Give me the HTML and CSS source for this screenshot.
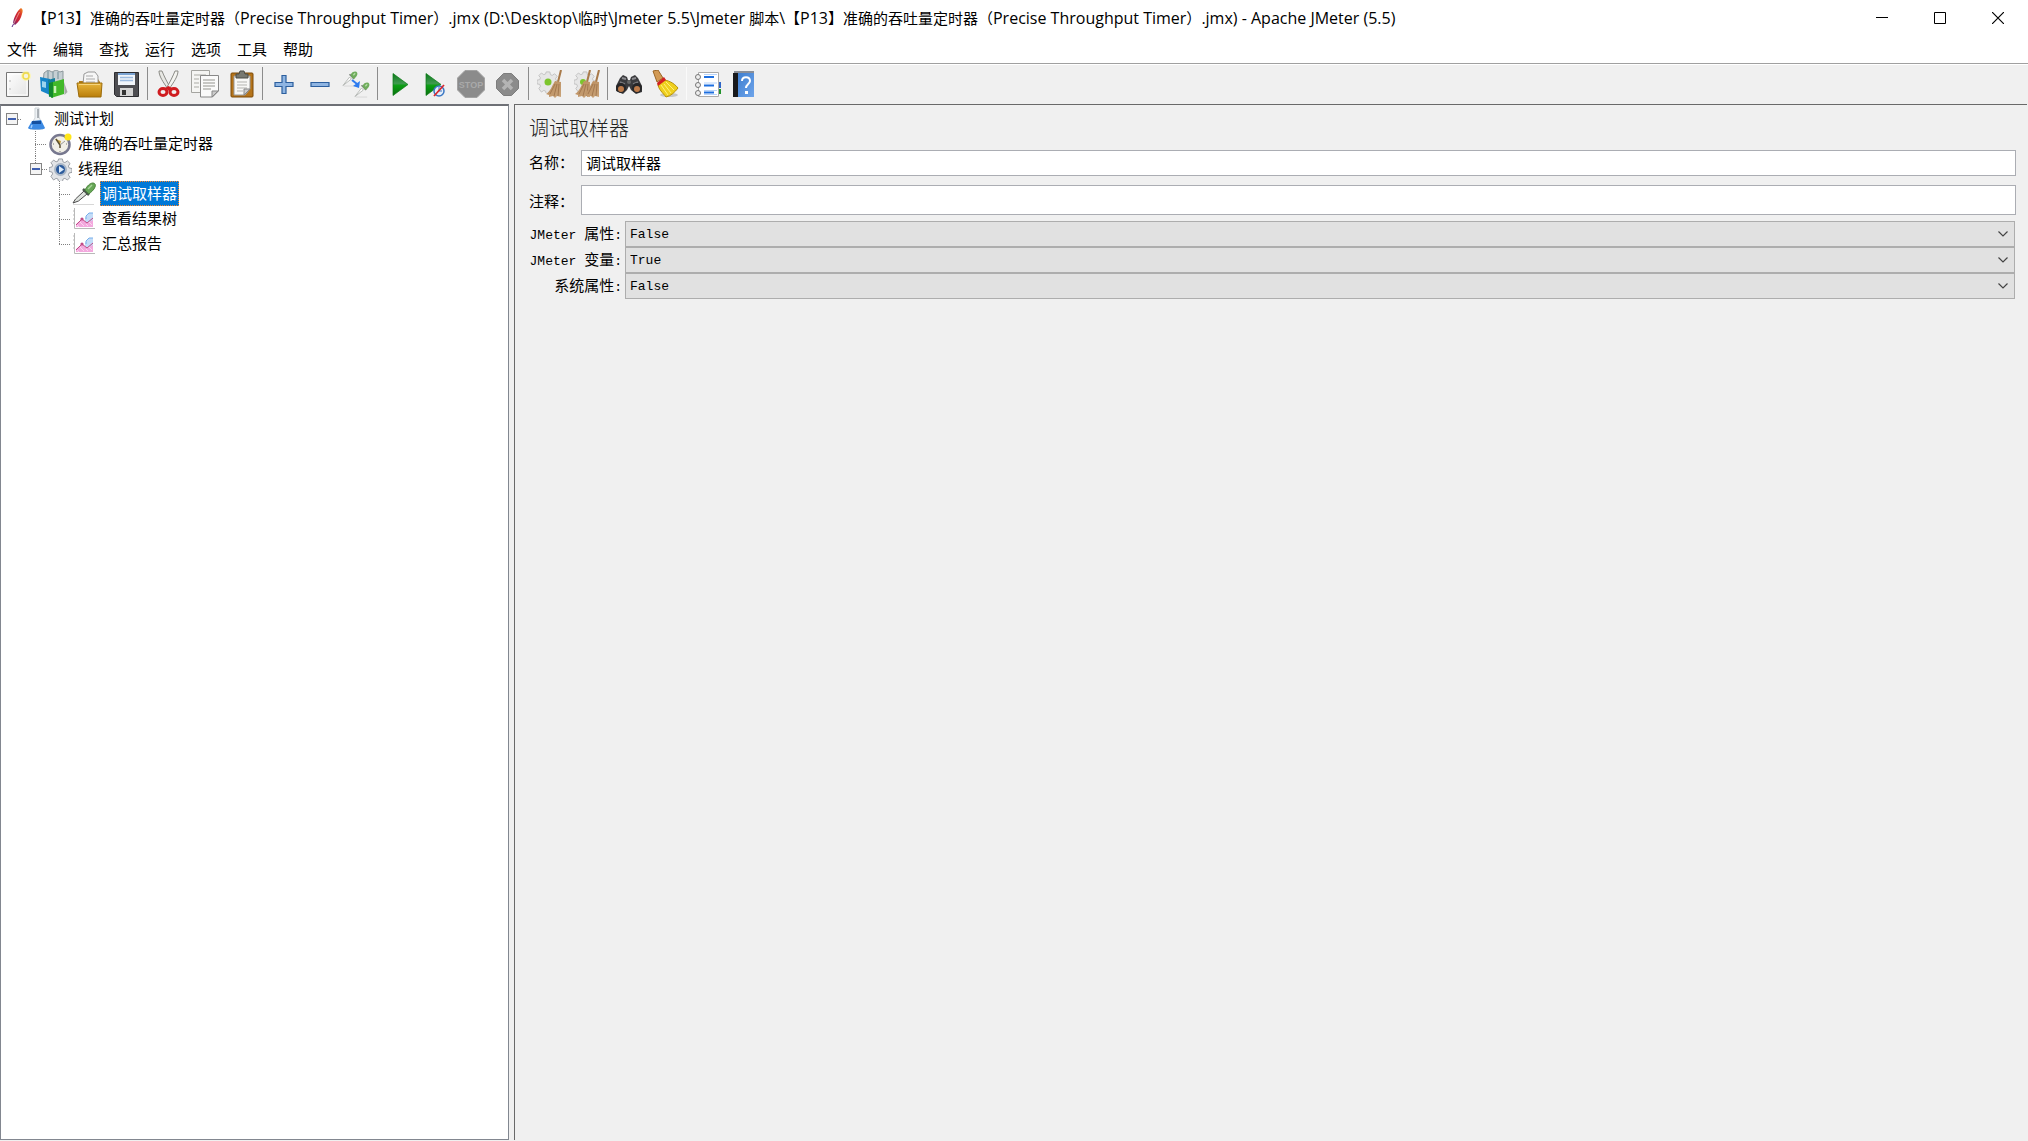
FILE: index.html
```html
<!DOCTYPE html>
<html lang="zh-CN">
<head>
<meta charset="utf-8">
<title>Apache JMeter (5.5)</title>
<link rel="stylesheet" href="styles.css">
</head>
<body>
<svg class="defs" width="0" height="0" aria-hidden="true">
  <defs>
    <linearGradient id="green" x1="0" y1="0" x2="0" y2="1"><stop offset="0" stop-color="#0c7a1c"/><stop offset=".45" stop-color="#3f9a4f"/><stop offset=".55" stop-color="#0b9f12"/><stop offset="1" stop-color="#0a6f10"/></linearGradient>
    <linearGradient id="paper" x1="0" y1="0" x2="1" y2="1"><stop offset="0" stop-color="#fff"/><stop offset="1" stop-color="#e3e3e3"/></linearGradient>
    <linearGradient id="gold" x1="0" y1="0" x2="0" y2="1"><stop offset="0" stop-color="#e8b63c"/><stop offset="1" stop-color="#b97d0a"/></linearGradient>
    <linearGradient id="blue" x1="0" y1="0" x2="1" y2="1"><stop offset="0" stop-color="#3f7fd0"/><stop offset="1" stop-color="#6ea4ea"/></linearGradient>
    <linearGradient id="feather" x1="0" y1="1" x2="1" y2="0"><stop offset="0" stop-color="#5a2a86"/><stop offset=".35" stop-color="#c3203c"/><stop offset=".7" stop-color="#d9352b"/><stop offset="1" stop-color="#f59a23"/></linearGradient>
    <linearGradient id="straw" x1="0" y1="0" x2="1" y2="1"><stop offset="0" stop-color="#b98a5a"/><stop offset="1" stop-color="#c9a47a"/></linearGradient>
    <symbol id="gear" viewBox="0 0 24 24"><path d="M10 1h4l.6 3 2 .8 2.600-1.800 2.800 2.800-1.800 2.600.8 2 3 .6v4l-3 .6-.8 2 1.800 2.600-2.800 2.800-2.600-1.800-2 .8-.6 3h-4l-.6-3-2-.8-2.600 1.800L2 19.200l1.800-2.600-.8-2-3-.6v-4l3-.6.8-2L2 5l2.800-2.800L7.400 4l2-.8z"/></symbol>
    <symbol id="brush" viewBox="0 0 16 28"><path d="M15 0 12 12" stroke="#a87a4a" stroke-width="2"/><path d="M9 11l6 1v15l-4-1-2 2-2-2-4 1v-2l-3-1C4 22 6 16 9 11z" fill="url(#straw)"/><path d="M9 14 4 24M11 14 8 26M13 14l-1 12" stroke="#9a7048" stroke-width=".8" fill="none"/></symbol>
    <symbol id="chart" viewBox="0 0 24 24"><path d="M2.500 1v20.500H23M1 4h2M1 8h2M1 12h2M1 16h2" stroke="#b9b9b9" fill="none"/><path d="M13 15v-4l4-5h4v9z" fill="#c3dcf8"/><path d="M14 12V9l3-3h4" stroke="#76aeea" fill="none"/><path d="M4 20v-3l6-5 5 4 6-3v7z" fill="#f3a9de"/><path d="m4 18 6-6 5 4 6-5" stroke="#c04b86" fill="none"/><circle cx="10" cy="12" r="1.600" fill="#c04b86"/><path d="m5 18 2 2m1-5 4 4m2-2 2 2m1-4 3 3" stroke="#fbd6ee"/></symbol>
    <symbol id="dropper" viewBox="0 0 24 24"><path d="M1 22.500h21" stroke="#d7d7d7"/><path d="M1 21 3.500 17 12 9l3 3-8.500 7z" fill="#dfe3df" stroke="#4c4c4c"/><path d="m11 7 6 6" stroke="#4a5a4a" stroke-width="2.500"/><path d="M13 8c2-4 5-7 8-7 2 0 3 2 2 4-1 3-4 5-6 7z" fill="#67a757" stroke="#4b853d"/><path d="m16 7 4-4" stroke="#a9d69c" stroke-width="1.500"/></symbol>
    <symbol id="dropper-small" viewBox="0 0 17 17"><path d="M2 16.500h12" stroke="#d7d7d7"/><path d="M1 16 8 7l2 2z" fill="#fff" stroke="#b4b8b4"/><path d="m8 4 5 5" stroke="#7d857d" stroke-width="1.800"/><path d="M9 5c1-3 3-4 5-4s3 2 2 4c-1 2-2 3-4 4z" fill="#6fac5c"/><path d="m12 5 2-2" stroke="#b4dba6" stroke-width="1.500"/></symbol>
  </defs>
</svg>

<header class="titlebar">
  <svg class="app-icon" width="12" height="20" viewBox="0 0 12 20" aria-hidden="true"><path d="M10 0c2 1 2 3 1 6-1 4-3 8-7 11L2 15C3 9 6 3 10 0z" fill="url(#feather)"/><path d="M8.500 4 2.500 16" stroke="#f2b7a8" stroke-width=".7"/><path d="m2.500 16-1.500 3" stroke="#5a2a86"/></svg>
  <h1 class="window-title">【<span class="en">P13</span>】准确的吞吐量定时器（<span class="en">Precise Throughput Timer</span>）<span class="en">.jmx (D:\Desktop\</span>临时<span class="en">\Jmeter 5.5\Jmeter </span>脚本<span class="en">\</span>【<span class="en">P13</span>】准确的吞吐量定时器（<span class="en">Precise Throughput Timer</span>）<span class="en">.jmx) - Apache JMeter (5.5)</span></h1>
  <div class="window-buttons">
    <button type="button" aria-label="最小化"><svg width="12" height="12"><path d="M0 5.500h12" stroke="#000"/></svg></button>
    <button type="button" aria-label="最大化"><svg width="12" height="12"><path d="M.5.500h11v11H.5z" stroke="#000" fill="none"/></svg></button>
    <button type="button" aria-label="关闭"><svg width="12" height="12"><path d="m0 0 12 12M12 0 0 12" stroke="#000" stroke-width="1.200"/></svg></button>
  </div>
</header>

<nav class="menubar">
  <button type="button">文件</button><button type="button">编辑</button><button type="button">查找</button><button type="button">运行</button><button type="button">选项</button><button type="button">工具</button><button type="button">帮助</button>
</nav>

<div class="toolbar" role="toolbar">
  <button type="button" aria-label="新建"><svg width="28" height="28"><path d="M2.500 2.500h22v24h-22z" fill="url(#paper)" stroke="#777"/><path d="M4 4h19v21H4z" fill="none" stroke="#fff"/><circle cx="6" cy="11" r="1" fill="#ccc"/><circle cx="6" cy="19" r="1" fill="#ccc"/><circle cx="22" cy="6" r="5" fill="#fff7a0" opacity=".7"/><circle cx="22" cy="6" r="3" fill="#f6f3dc" stroke="#f1dc4c" stroke-width="1.500"/></svg></button>
  <button type="button" aria-label="模板"><svg width="28" height="28"><path d="M4 3l4-3 4 2 4-2 4 2 3-1v12H3z" fill="#c6cfd3" stroke="#8d989c"/><path d="M8 1v8M13 2v7M18 2v7" stroke="#6f8b96"/><path d="m0 7 10 2v16L1 21z" fill="#1785c8"/><path d="m2 11 4 1v6l-4-1z" fill="#9ed5ee"/><path d="m8 10 7-2v17l-6 2z" fill="#137d9d"/><path d="m10 13 3-1 11-3v15l-13 4z" fill="#42b929"/><path d="m9 13 4-1v16l-4-2z" fill="#138a2d"/><path d="M15 16v7" stroke="#c8f2b6" stroke-width="2.500"/><path d="m24 12 .5 13 3-3z" fill="#a7aaa7"/></svg></button>
  <button type="button" aria-label="打开"><svg width="28" height="28"><path d="M3 11h5v-2h14l2 3v14H3z" fill="#b17b14"/><path d="M7 14 8 4l4-2h7l3 4v8z" fill="#f6f6f6" stroke="#999"/><path d="M10 6h7m-7 3h9m-9 3h9" stroke="#aaa"/><path d="M1 13h25l-1 14H3z" fill="url(#gold)" stroke="#9c6c0c"/><path d="M3 14.500h21" stroke="#f5d47c"/></svg></button>
  <button type="button" aria-label="保存"><svg width="28" height="28"><path d="M2.500 2.500h24v24h-22l-2-2z" fill="#4e4e52" stroke="#2c2c30"/><path d="M6 3h17v12H6z" fill="#f1f5fa"/><path d="M6 3h17v2H6z" fill="#7ba4d3"/><path d="M8 7.500h13m-13 3h13" stroke="#9cbbe0" stroke-width="1.500"/><path d="M8 18h13v8H8z" fill="#d4d4d4"/><path d="M10 20h4v5h-4z" fill="#333"/></svg></button>
  <span class="sep"></span>
  <button type="button" aria-label="剪切"><svg width="28" height="28"><path d="M4 1c0 5 4 11 9 18l2-2C12 12 9 6 7 1z" fill="#e8e8e4" stroke="#8b8b86"/><path d="M23 1c0 5-4 11-9 18l-2-2C15 12 18 6 20 1z" fill="#f4f4f0" stroke="#8b8b86"/><g fill="none" stroke="#d01c20" stroke-width="3"><ellipse cx="8" cy="22" rx="4" ry="3.500"/><ellipse cx="19" cy="22" rx="4" ry="3.500"/></g><path d="m10 18 3.500-2 3.500 2-3 3z" fill="#d01c20"/></svg></button>
  <button type="button" aria-label="复制"><svg width="30" height="28"><path d="M1.500.5h18v22h-18z" fill="#f5f5f3" stroke="#a4a4a0"/><path d="M4 5h12M4 9h5m-5 4h5m-5 4h5" stroke="#c4c4c0" stroke-width="1.500"/><path d="M10.500 5.500h18V21l-6 6h-12z" fill="#fafafa" stroke="#888"/><path d="M13 10h12m-12 3h12m-12 3h12m-12 3h8" stroke="#b7b7b3" stroke-width="1.500"/><path d="M22 27v-6h6z" fill="#ccc" stroke="#888"/></svg></button>
  <button type="button" aria-label="粘贴"><svg width="28" height="28"><rect x="4" y="3" width="22" height="24" rx="1" fill="#b5741a" stroke="#7c4a08"/><path d="M7 6h16v13l-5 6H7z" fill="#f8f8f6" stroke="#999"/><path d="M10 12h10m-10 3h10m-10 3h10m-10 3h6" stroke="#b3b3af"/><path d="M17 25v-6h6z" fill="#ccc" stroke="#888"/><path d="M9 8V4h3l1-3h4l1 3h3v4z" fill="#777870" stroke="#4c4d47"/></svg></button>
  <span class="sep"></span>
  <button type="button" aria-label="展开"><svg width="28" height="28"><path d="M12 5.500h4v7h7v4h-7v7h-4v-7H5v-4h7z" fill="#8fb5e2" stroke="#2c5f9e" stroke-width="1.200"/></svg></button>
  <button type="button" aria-label="折叠"><svg width="28" height="28"><path d="M5 12.500h18v4H5z" fill="#8fb5e2" stroke="#2c5f9e" stroke-width="1.200"/></svg></button>
  <button type="button" aria-label="切换"><svg width="28" height="28"><use href="#dropper-small" x="0" y="0" width="16" height="17"/><use href="#dropper-small" x="12" y="11" width="16" height="17"/><path d="m10 10 5 4" stroke="#2f7df0" stroke-width="2"/><path d="m18 11-1 7-6-2z" fill="#2f7df0"/></svg></button>
  <span class="sep"></span>
  <button type="button" aria-label="启动"><svg width="28" height="28"><path d="M8 3.500 23 14.500 8 25.500z" fill="url(#green)" stroke="#0a7a14" stroke-width=".7"/></svg></button>
  <button type="button" aria-label="不停顿开始"><svg width="28" height="28"><path d="M5 3.500 20 14.500 5 25.500z" fill="url(#green)" stroke="#0a7a14" stroke-width=".7"/><circle cx="18" cy="21" r="5" fill="#e4edf9" stroke="#3b78c4" stroke-width="1.500"/><path d="M18 17v4h3" stroke="#3b78c4" fill="none"/><path d="m13 26 10-11" stroke="#d9262c" stroke-width="1.700"/></svg></button>
  <button type="button" aria-label="停止" disabled><svg width="28" height="28"><path d="M8 .5h12L27.500 8v12L20 27.500H8L.5 20V8z" fill="#8b8b8b" stroke="#a2a2a2"/><text x="14" y="18" class="stop-text" text-anchor="middle">STOP</text></svg></button>
  <button type="button" aria-label="关闭线程" disabled><svg width="28" height="28"><path d="M10.500 3.500h8l7 7v8l-7 7h-8l-7-7v-8z" fill="#8b8b8b" stroke="#7d7d7d"/><path d="m10 10 9 9m0-9-9 9" stroke="#b4b4b4" stroke-width="3.500"/></svg></button>
  <span class="sep"></span>
  <button type="button" aria-label="清除"><svg width="28" height="28"><use href="#gear" x="1" y="1" width="22" height="22" fill="#e6e6e6" stroke="#c0c0c0"/><circle cx="12" cy="12" r="3.500" fill="#7cc52c"/><use href="#brush" x="10" y="0" width="16" height="28"/></svg></button>
  <button type="button" aria-label="清除全部"><svg width="28" height="28"><use href="#gear" x="2" y="1" width="22" height="22" fill="#e6e6e6" stroke="#c0c0c0"/><circle cx="11" cy="12" r="3" fill="#7cc52c"/><use href="#brush" x="3" y="0" width="16" height="28"/><use href="#brush" x="12" y="0" width="16" height="28"/></svg></button>
  <span class="sep"></span>
  <button type="button" aria-label="查找"><svg width="28" height="28"><path d="M5 8l3-3 4 2 1 3h2l1-3 4-2 3 3 4 8v6l-6 2-5-4-2-4-2 4-4 4-7-3v-5z" fill="#3a3a3d"/><path d="m7 8 4 1M21 8l-4 1" stroke="#8c8c90" stroke-width="2"/><path d="m5 12 5 2m13-2-5 2" stroke="#77777b" stroke-width="1.500"/><circle cx="6" cy="18" r="5" fill="#262628"/><circle cx="22" cy="18" r="5" fill="#262628"/><circle cx="6" cy="19" r="3" fill="#bd7a49"/><circle cx="22" cy="19" r="3" fill="#bd7a49"/><circle cx="14" cy="12" r="2" fill="#666"/></svg></button>
  <button type="button" aria-label="重置查找"><svg width="28" height="28"><ellipse cx="18" cy="25" rx="9" ry="2" fill="#c6c6c6"/><path d="m2 1 5-1 5 8-6 4z" fill="#d29a55" stroke="#9b6626"/><path d="M12 10c5 0 11 3 15 8-3 4-7 8-12 9C12 23 7 19 7 14z" fill="#efcf1d" stroke="#b8920a"/><path d="M10 15l7 10M13 14l7 9M15 12l8 8" stroke="#fff07a" fill="none"/><path d="m6 13 7-6 2 3-8 6z" fill="#d32020"/></svg></button>
  <span class="sep sep-light"></span>
  <button type="button" aria-label="函数助手"><svg width="28" height="28"><path d="M22 12h5v6h-5z" fill="#2f66c8"/><path d="M22 19h5v5h-5z" fill="#22932b"/><path d="M4.500 2.500h20v24h-20z" fill="#fff" stroke="#aaa"/><path d="M10 7h10m-10 8.500h10m-10 7h10" stroke="#1d6fe0" stroke-width="2"/><path d="M10 4.500h13m-13 8.500h13m-13 7.500h13m-13 4h13" stroke="#b8d4fa"/><g fill="#eee" stroke="#777"><circle cx="4" cy="7" r="2.500"/><circle cx="4" cy="15" r="2.500"/><circle cx="4" cy="23" r="2.500"/></g></svg></button>
  <button type="button" aria-label="帮助"><svg width="28" height="28"><path d="M4 1h20v3H4z" fill="#8a8f98"/><path d="M3 3h5v24H3z" fill="#18191c"/><path d="M8 3h16v24H8z" fill="url(#blue)"/><path d="M12 11c0-5 8-5 8 0 0 3-4 3-4 7" stroke="#fff" stroke-width="2" fill="none"/><path d="M15 21h3v3h-3z" fill="#fff"/></svg></button>
</div>

<main class="workspace">
  <section class="tree-pane">
    <ul class="tree">
      <li class="row"><span class="cell root-line"><button type="button" class="expander" aria-label="折叠"></button></span>
        <span class="cell icon"><svg width="24" height="24"><path d="M11 1h4v9l5 11c0 2-15 2-15 0l6-10z" fill="#eef2f5" stroke="#ccd2d7"/><path d="M14 2v9" stroke="#969da3" stroke-width="1.500"/><path d="m8 14 9-1 4 8c0 2-17 2-17 0z" fill="#3b8ae4"/><path d="M8 15.500h9" stroke="#1450a0" stroke-width="3"/><path d="m8 18-1 3" stroke="#9dcbff" stroke-width="1.500"/></svg></span><span class="label">测试计划</span></li>
      <li class="row"><span class="cell"></span><span class="cell guide"></span>
        <span class="cell icon"><svg width="24" height="24"><circle cx="12" cy="12.500" r="9.500" fill="#f1efe6" stroke="#77788f" stroke-width="2.500"/><path d="m12 13-5-6 6 2z" fill="#c8a13c"/><path d="m8 7 4 6v3" stroke="#5b5030" stroke-width="1.500" fill="none"/><path d="m12 13 5-4" stroke="#999" fill="none"/><path d="M5 12h1m12 0h1m-7 7v1" stroke="#777"/><circle cx="20" cy="5" r="3.500" fill="#ffe61a"/></svg></span><span class="label">准确的吞吐量定时器</span></li>
      <li class="row"><span class="cell"></span><span class="cell branch-line"><button type="button" class="expander" aria-label="折叠"></button></span>
        <span class="cell icon"><svg width="24" height="24"><use href="#gear" x="1" y="1" width="23" height="23" fill="#e2e4e7" stroke="#999da3"/><circle cx="12.500" cy="12.500" r="5.500" fill="#2c5b9c" stroke="#a9b6c6" stroke-width="2"/><path d="m11 9 5 3.500-5 3.500z" fill="#dcebfa"/></svg></span><span class="label">线程组</span></li>
      <li class="row"><span class="cell"></span><span class="cell"></span><span class="cell guide"></span>
        <span class="cell icon"><svg width="24" height="24"><use href="#dropper" width="24" height="24"/></svg></span><span class="label selected">调试取样器</span></li>
      <li class="row"><span class="cell"></span><span class="cell"></span><span class="cell guide"></span>
        <span class="cell icon"><svg width="24" height="24"><use href="#chart" width="24" height="24"/></svg></span><span class="label">查看结果树</span></li>
      <li class="row"><span class="cell"></span><span class="cell"></span><span class="cell guide last"></span>
        <span class="cell icon"><svg width="24" height="24"><use href="#chart" width="24" height="24"/></svg></span><span class="label">汇总报告</span></li>
    </ul>
  </section>

  <form class="editor">
    <h2 class="editor-title">调试取样器</h2>
    <div class="field"><label for="name">名称：</label><input id="name" type="text" value="调试取样器"></div>
    <div class="field field-comment"><label for="comment">注释：</label><input id="comment" type="text"></div>
    <div class="options">
      <label for="jprops"><span class="latin">JMeter </span>属性<span class="latin">:</span></label>
      <div class="combo"><select id="jprops"><option>False</option><option>True</option></select><svg width="10" height="6"><path d="m.5.500 4.500 4.500L9.500.500" stroke="#444" stroke-width="1.200" fill="none"/></svg></div>
      <label for="jvars"><span class="latin">JMeter </span>变量<span class="latin">:</span></label>
      <div class="combo"><select id="jvars"><option>True</option><option>False</option></select><svg width="10" height="6"><path d="m.5.500 4.500 4.500L9.500.500" stroke="#444" stroke-width="1.200" fill="none"/></svg></div>
      <label for="sprops">系统属性<span class="latin">:</span></label>
      <div class="combo"><select id="sprops"><option>False</option><option>True</option></select><svg width="10" height="6"><path d="m.5.500 4.500 4.500L9.500.500" stroke="#444" stroke-width="1.200" fill="none"/></svg></div>
    </div>
  </form>
</main>
</body>
</html>
```
FILE: styles.css
```css
* { box-sizing: border-box; }

body {
  margin: 0;
  min-height: 100vh;
  display: flex;
  flex-direction: column;
  background: #fff;
  color: #000;
  font: 15px/20px "Noto Sans CJK SC", sans-serif;
}

button, input, select { font: inherit; color: inherit; }
button { border: 0; padding: 0; background: none; }
svg { display: block; }
.defs { position: absolute; }

/* Title bar */
.titlebar { display: flex; align-items: center; height: 36px; padding: 0 1px 0 11px; }
.window-title {
  flex: 1;
  min-width: 0;
  margin: 0 0 0 9px;
  overflow: hidden;
  white-space: nowrap;
  font: 15px/20px "Noto Sans CJK SC", sans-serif;
}
.en { font: 16px/20px "Open Sans", sans-serif; }
.window-buttons { display: flex; }
.window-buttons button { display: grid; place-items: center; width: 58px; height: 36px; }

/* Menu bar */
.menubar { display: flex; height: 28px; padding: 0 0 2px 7px; gap: 16px; border-bottom: 1px solid #a0a0a0; }

/* Tool bar */
.toolbar { display: flex; align-items: center; height: 40px; padding-bottom: 2px; border-top: 1px solid #fff; background: #f0f0f0; }
.toolbar button { display: grid; place-items: center; width: 36px; height: 36px; }
.sep { width: 1px; height: 33px; margin: 0 3px; background: #8c8c8c; }
.sep-light { background: #fafafa; }
.stop-text { font: bold 9px "Liberation Sans", sans-serif; fill: #a9a9a9; }

/* Split panes */
.workspace { flex: 1; display: grid; grid-template-columns: 509px 1fr; gap: 5px; padding: 0 1px 1px 0; background: #f0f0f0; }
.tree-pane { border: 1px solid #828790; border-top: 2px solid #6e7076; background: #fff; }

.tree { margin: 0 0 0 -1px; padding: 0; list-style: none; }
.row { display: flex; align-items: center; height: 25px; }
.cell { width: 24px; height: 25px; display: grid; place-items: center; }
.guide, .branch-line, .root-line {
  --down: repeating-linear-gradient(to bottom, #808080 0 1px, transparent 1px 2px);
  --across: repeating-linear-gradient(to right, #808080 0 1px, transparent 1px 2px);
  background-repeat: no-repeat;
}
.guide { background-image: var(--down), var(--across); background-position: 11px 0, 11px 13px; background-size: 1px 100%, 12px 1px; }
.guide.last { background-size: 1px 13px, 12px 1px; }
.branch-line { background-image: var(--down), var(--across); background-position: 11px 0, 12px 13px; background-size: 1px 8px, 12px 1px; }
.root-line { background-image: var(--across); background-position: 12px 13px; background-size: 10px 1px; }
.expander { width: 12px; height: 12px; border: 1px solid #848484; background: linear-gradient(#3f5fb0, #3f5fb0) center / 8px 2px no-repeat, #f4f4f4; }
.label { margin-left: 4px; height: 25px; padding: 0 2px; line-height: 23px; }
.selected { outline: 1px dotted #ff8728; outline-offset: -1px; background: #0078d7; color: #fff; }

/* Editor */
.editor { padding: 9px 11px 9px 14px; border: solid #696969; border-width: 1px 0 0 1px; background: #f0f0f0; }
.editor-title { margin: 0 0 8px; font-size: 20px; font-weight: 300; line-height: 28px; color: #222; }
.field { display: flex; align-items: center; margin-bottom: 9px; }
.field label { width: 52px; padding-bottom: 2px; }
.field input { flex: 1; min-width: 0; height: 26px; padding: 0 4px 2px; border: 1px solid #abadb3; background: #fff; }
.field-comment { margin-bottom: 6px; }
.field-comment label { padding: 2px 0 0; }
.field-comment input { height: 30px; }
.options { display: grid; grid-template-columns: 93px 1fr; column-gap: 3px; padding-right: 1px; align-items: center; text-align: right; }
.latin { font: 13px/20px "Liberation Mono", monospace; white-space: pre; }
.combo { display: grid; grid-template-columns: 1fr 24px; align-items: center; }
.combo select {
  grid-area: 1 / 1 / 2 / 3;
  width: 100%;
  height: 26px;
  padding: 2px 4px 0;
  border: 1px solid #adadad;
  border-radius: 0;
  background: #e1e1e1;
  appearance: none;
  font: 13px/20px "Liberation Mono", monospace;
}
.combo svg { grid-area: 1 / 2 / 2 / 3; justify-self: center; pointer-events: none; z-index: 1; }
```
